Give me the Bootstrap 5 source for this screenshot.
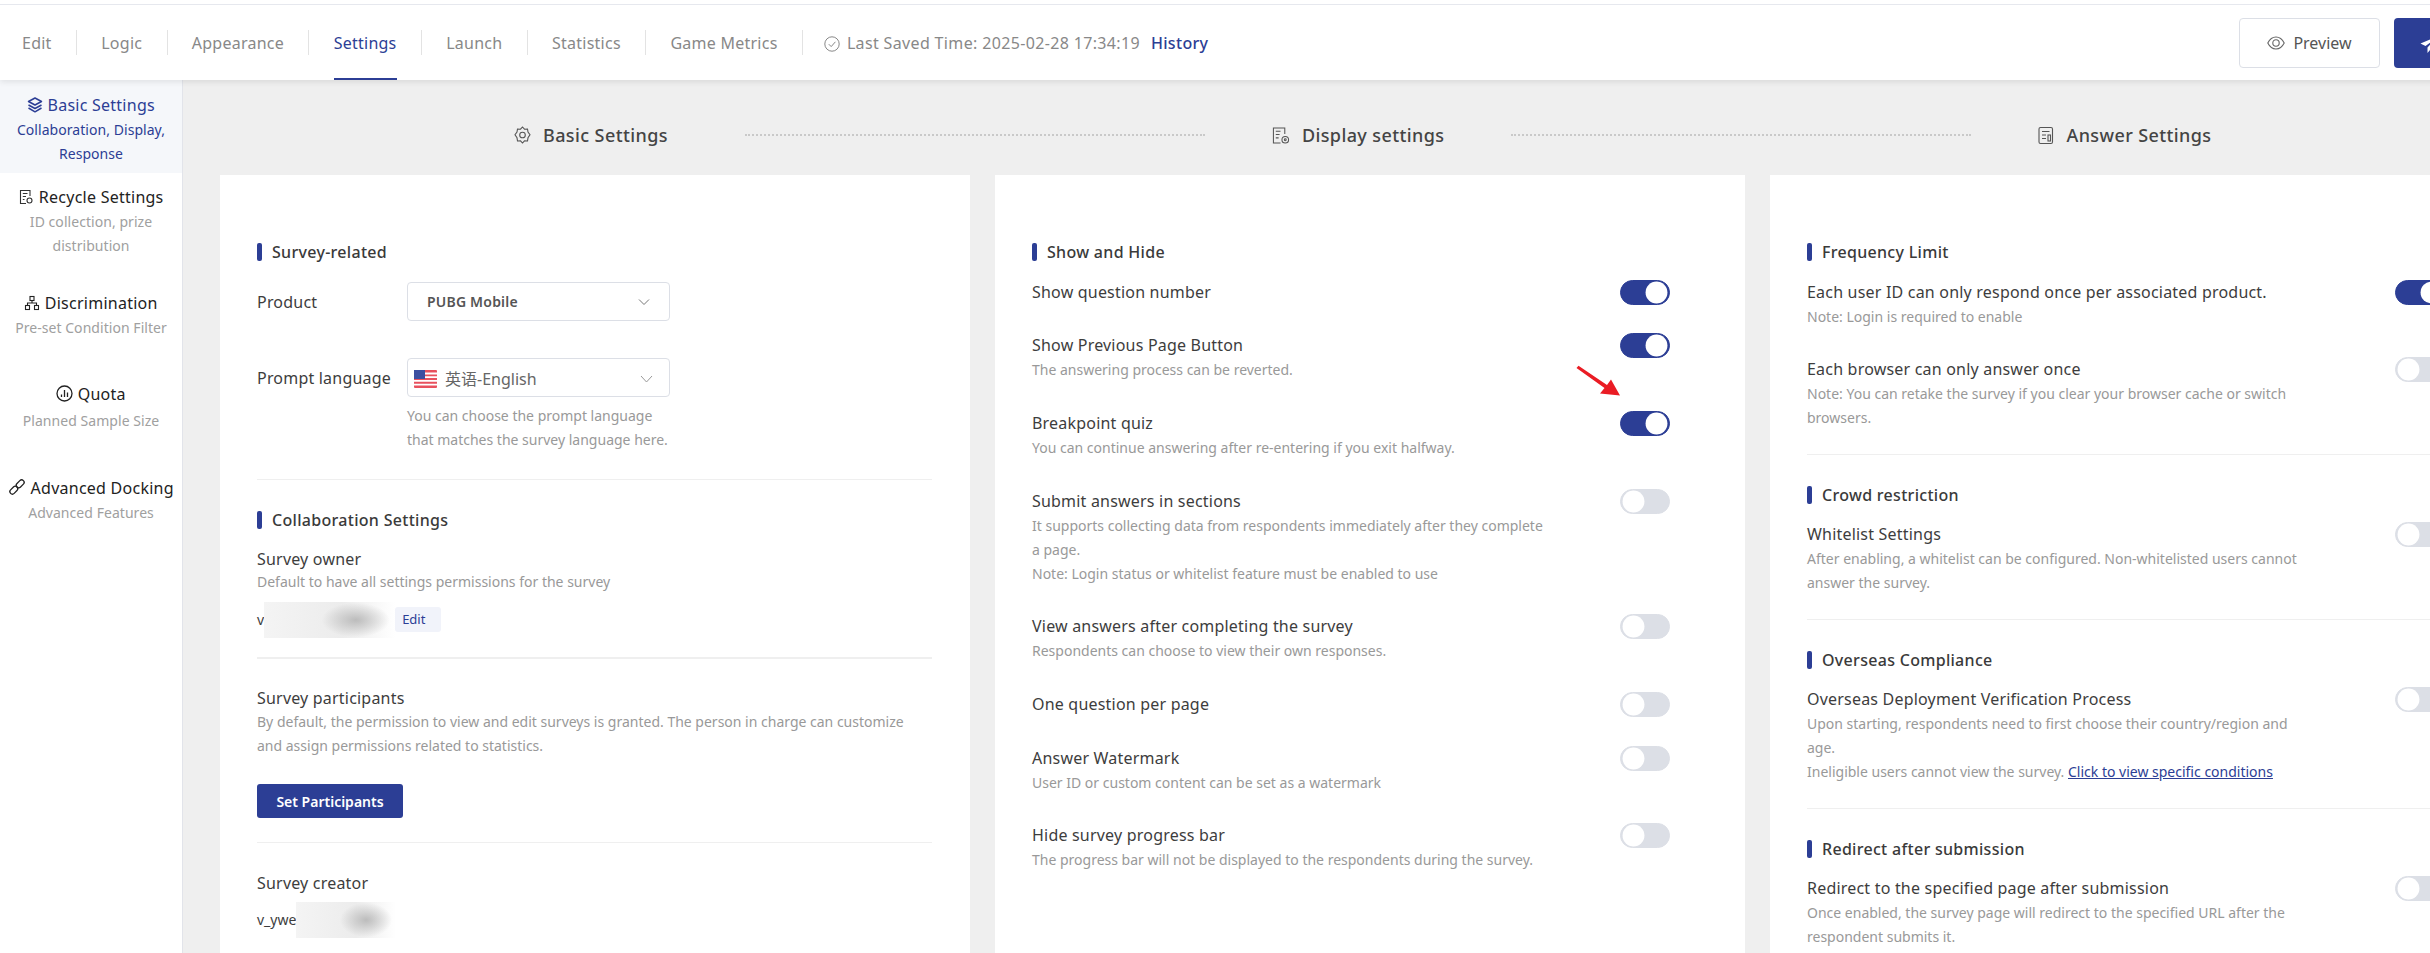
<!DOCTYPE html>
<html lang="en">
  <head>
    <meta charset="UTF-8" />
    <title>Survey Settings</title>
    <link href="https://cdn.jsdelivr.net/npm/bootstrap@5.3.0/dist/css/bootstrap.min.css" rel="stylesheet" />
    <style>
      html, body { height: 953px; overflow: hidden; background: #efefef; }
      body { font-family: "Noto Sans", "Noto Sans CJK SC", sans-serif; font-size: 16px; color: #3d3d3d; }
      .page-wrap { width: 2520px; }

      /* top bar */
      .top-bar { height: 80px; padding-top: 4px; background: #fff; box-shadow: 0 2px 6px rgba(0, 0, 0, .09); position: relative; z-index: 2; }
      .top-inner { height: 76px; border-top: 1px solid #e6e8ee; }
      .tab-list { margin-top: 25px; padding-left: 22px; align-self: flex-start; }
      .tab-item { height: 25px; padding: 0 24.3px; border-right: 1px solid #e3e3e3; }
      .tab-item:first-child { padding-left: 0; }
      .tab-link { display: block; height: 50px; line-height: 25px; padding: 1px 0 22px; border-bottom: 2px solid transparent; color: #888; letter-spacing: .25px; text-decoration: none; }
      .tab-link.on { color: #2c3e95; border-bottom-color: #2c3e95; }
      .save-info { margin: 26px 0 0 21px; line-height: 25px; color: #888; letter-spacing: .35px; align-self: flex-start; }
      .save-info svg { margin-right: 7px; }
      .save-info a { margin-left: 11px; color: #2c3e95; font-weight: 500; text-decoration: none; letter-spacing: .3px; }
      .top-actions { margin: 13px 0 0 auto; gap: 14px; }
      .btn-preview { width: 141px; height: 50px; border: 1px solid #dcdfe6; color: #555; background: #fff; font-size: 16px; border-radius: 4px; }
      .btn-publish { width: 126px; height: 50px; background: #2c3e95; border: 0; border-radius: 4px; text-align: left; padding-left: 26px; }

      /* sidebar */
      .side-bar { width: 183px; height: 873px; background: #fff; border-right: 1px solid #e2e4ea; flex-shrink: 0; text-align: center; }
      .side-item { padding: 12px 0 7px; line-height: 26px; color: #222; white-space: nowrap; letter-spacing: .25px; }
      .side-item small { display: block; font-size: 14px; line-height: 24px; color: #a0a0a0; letter-spacing: .05px; }
      .side-item.on { background: #f5f7fa; color: #2c3e95; }
      .side-item.on small { color: #2c3e95; }
      .side-item:nth-child(2) { margin: -1px 0 12.5px; }
      .side-item:nth-child(3) { margin-bottom: 22px; }
      .side-item:nth-child(4) { margin-bottom: 23px; }
      .side-item:nth-child(4) small { margin-top: 2px; }
      .side-item svg { vertical-align: -2px; }

      /* steps */
      .content-area { padding-left: 37px; }
      .step-row { height: 95px; padding: 15px 0 0 294px; }
      .step-item { font-size: 18px; font-weight: 500; color: #444; gap: 12px; letter-spacing: .4px; white-space: nowrap; }
      .step-line { width: 460px; margin: 0 67px; border-top: 2px dotted #c9c9c9; }
      .step-line.first-line { margin-left: 77px; }

      /* cards */
      .panel-row { gap: 25px; }
      .panel-box { width: 750px; height: 778px; padding: 64px 38px 0 37px; flex-shrink: 0; background: #fff; }
      .group-title { padding-left: 15px; line-height: 26px; font-weight: 500; letter-spacing: .3px; color: #3a3a3a; }
      .title-bar { display: block; width: 5px; height: 18px; margin: 4px 10px 0 -15px; float: left; background: #2c3e95; border-radius: 2px; }
      .group-sep { height: 1px; background: #efefef; }
      .opt-row { margin-top: 13.5px; }
      .opt-row + .opt-row { margin-top: 27.7px; }
      .opt-name { line-height: 26px; letter-spacing: .2px; }
      .opt-desc { font-size: 14px; line-height: 24px; color: #999; }
      .opt-desc a { color: #2c3e95; }
      .opt-row .form-switch { min-height: 0; margin: 0 37px 0 0; padding: 0; flex-shrink: 0; }
      .opt-row .form-switch .form-check-input { width: 50px; height: 25px; margin: 1px 0 0; float: none; display: block; border-color: #dcdfe6; background-color: #dcdfe6; background-size: 25px 25px; background-image: url("data:image/svg+xml,%3csvg xmlns='http://www.w3.org/2000/svg' viewBox='-4 -4 8 8'%3e%3ccircle r='3.5' fill='%23fff'/%3e%3c/svg%3e"); }
      .opt-row .form-switch .form-check-input:checked { background-color: #2c3e95; border-color: #2c3e95; }
      .field-label { width: 150px; letter-spacing: .2px; }
      .field-box { width: 263px; height: 39px; padding: 0 19px; border: 1px solid #dcdfe6; border-radius: 4px; font-size: 14px; font-weight: 600; letter-spacing: .2px; color: #555; }
      .field-box.flag-box { padding: 2px 16px 0 6px; font-size: 16px; font-weight: 400; letter-spacing: 0; color: #666; }
      .flag-box svg:first-child { margin-right: 8px; }
      .blur-name { display: inline-block; height: 36px; background: radial-gradient(ellipse 26% 48% at 70% 50%, #bcbcbc, rgba(230, 230, 230, 0)), linear-gradient(to right, #f4f4f4, #ececec 60%, #fff); }
      .user-row { height: 25px; line-height: 25px; font-size: 14px; }
      .edit-chip { height: 25px; width: 46px; padding-left: 7px; background: #f1f3fa; color: #2c3e95; font-size: 13px; border-radius: 3px; }
      .btn-set { display: block; width: 146px; height: 34px; margin-top: 26px; padding: 0; background: #2c3e95; border: 0; color: #fff; font-size: 14px; font-weight: 600; border-radius: 3px; }
      .note-arrow { position: absolute; left: 580px; top: 190px; }

      /* vertical rhythm of the first card */
      .field-row-a { margin-top: 17px; }
      .field-row-b { margin-top: 37px; }
      .help-text { margin: 7px 0 0 150px; }
      .sep-a { margin-top: 27px; }
      .title-b { margin-top: 27px; }
      .owner-name { margin-top: 13px; }
      .owner-desc { margin-top: -2px; }
      .owner-row { margin-top: 13px; }
      .owner-blur { width: 131px; margin-top: -5px; }
      .sep-b { margin-top: 25px; height: 2px; }
      .part-name { margin-top: 26px; }
      .part-desc { margin-top: -1px; }
      .sep-c { margin-top: 24px; }
      .creator-name { margin-top: 27px; }
      .creator-row { margin-top: 11px; }
      .creator-blur { width: 100px; margin-top: -5px; }
      .sep-d { margin: 24px 0 26.5px; }
    </style>
  </head>
  <body>
    <div class="page-wrap">
      <div class="top-bar">
        <div class="top-inner d-flex">
          <ul class="tab-list nav">
            <li class="tab-item"><a class="tab-link" href="#">Edit</a></li>
            <li class="tab-item"><a class="tab-link" href="#">Logic</a></li>
            <li class="tab-item"><a class="tab-link" href="#">Appearance</a></li>
            <li class="tab-item"><a class="tab-link on" href="#">Settings</a></li>
            <li class="tab-item"><a class="tab-link" href="#">Launch</a></li>
            <li class="tab-item"><a class="tab-link" href="#">Statistics</a></li>
            <li class="tab-item"><a class="tab-link" href="#">Game Metrics</a></li>
          </ul>
          <div class="save-info d-flex align-items-center">
            <svg width="16" height="16" viewBox="0 0 16 16" fill="none" stroke="#888"><circle cx="8" cy="8" r="7.2" /><path d="M4.8 8.2 7.2 10.6 11.4 5.8" /></svg>
            Last Saved Time: 2025-02-28 17:34:19
            <a href="#">History</a>
          </div>
          <div class="top-actions d-flex">
            <button class="btn-preview btn d-flex align-items-center justify-content-center gap-2">
              <svg width="18" height="14" viewBox="0 0 18 14" fill="none" stroke="#666" stroke-width="1.1"><path d="M.8 7C2.800 3 5.600 1 9 1s6.200 2 8.200 6c-2 4-4.800 6-8.200 6S2.800 11 .8 7Z" /><circle cx="9" cy="7" r="3.200" /></svg>
              Preview
            </button>
            <button class="btn-publish btn" aria-label="Publish">
              <svg width="18" height="18" viewBox="0 0 18 18" fill="#fff"><path d="M17.500 .5 .5 7.500l5 2.500 9-6.500-7 8v5.500l3-3.500 3.500 2Z" /></svg>
            </button>
          </div>
        </div>
      </div>

      <div class="d-flex">
        <div class="side-bar">
          <div class="side-item on">
            <svg width="16" height="16" viewBox="0 0 16 16" fill="none" stroke="#2c3e95" stroke-width="1.5" stroke-linejoin="round"><path d="M8 1 14.500 4.500 8 8 1.500 4.500Z" /><path d="M1.500 8 8 11.500 14.500 8" /><path d="M1.500 11 8 14.800 14.500 11" /></svg>
            Basic Settings
            <small>Collaboration, Display,<br />Response</small>
          </div>
          <div class="side-item">
            <svg width="16" height="16" viewBox="0 0 16 16" fill="none" stroke="#333" stroke-width="1.1"><path d="M8 14.500H2.500V1.500H12V7" /><path d="M4.800 4.500H9.500M4.800 7.500H8M4.800 10.500H6.500" /><circle cx="11.500" cy="11.500" r="2.500" /></svg>
            Recycle Settings
            <small>ID collection, prize<br />distribution</small>
          </div>
          <div class="side-item">
            <svg width="16" height="16" viewBox="0 0 16 16" fill="none" stroke="#222" stroke-width="1.1"><rect x="6" y="1.500" width="4" height="4" /><rect x="1.500" y="10.500" width="4" height="4" /><rect x="10.500" y="10.500" width="4" height="4" /><path d="M8 5.500V8M3.500 10.500V8H12.500V10.500" /></svg>
            Discrimination
            <small>Pre-set Condition Filter</small>
          </div>
          <div class="side-item">
            <svg width="17" height="17" viewBox="0 0 17 17" fill="none" stroke="#222" stroke-width="1.300"><circle cx="8.500" cy="8.500" r="7.500" /><path d="M5.500 9.500V12M8.500 5V12M11.500 7.500V12" /></svg>
            Quota
            <small>Planned Sample Size</small>
          </div>
          <div class="side-item">
            <svg width="18" height="18" viewBox="0 0 18 18" fill="none" stroke="#222" stroke-width="1.300"><rect x="-4.500" y="-2.500" width="9" height="5" rx="2.500" transform="translate(5.800 12.200) rotate(-45)" /><rect x="-4.500" y="-2.500" width="9" height="5" rx="2.500" transform="translate(12.200 5.800) rotate(-45)" /></svg>
            Advanced Docking
            <small>Advanced Features</small>
          </div>
        </div>

        <div class="content-area">
          <div class="step-row d-flex align-items-center">
            <div class="step-item d-flex align-items-center">
              <svg width="17" height="18" viewBox="0 0 17 18" fill="none" stroke="#555" stroke-width="1.100"><path d="M8.500 1 10.500 3.200 13.500 3 14 6 16 8.800 14 11.800 13.500 15 10.500 14.800 8.500 17 6.500 14.800 3.500 15 3 11.800 1 8.800 3 6 3.500 3 6.500 3.200Z" /><circle cx="8.500" cy="9" r="2.800" /></svg>
              Basic Settings
            </div>
            <div class="step-line first-line"></div>
            <div class="step-item d-flex align-items-center">
              <svg width="18" height="19" viewBox="0 0 19 19" fill="none" stroke="#555" stroke-width="1.100"><path d="M9 17.500H1.500V1.500H13.500V8" /><path d="M4 5H9M4 8.500H8M4 12H7" /><circle cx="14" cy="14" r="3.500" /><circle cx="14" cy="14" r="1" /></svg>
              Display settings
            </div>
            <div class="step-line"></div>
            <div class="step-item d-flex align-items-center">
              <svg width="16" height="19" viewBox="0 0 16 19" fill="none" stroke="#555" stroke-width="1.100"><rect x="1" y="1.500" width="13.500" height="16" rx="1.500" /><path d="M4 5.500H11.500M4 9H8M4 12.500H8" /><rect x="10" y="9" width="2.500" height="6" /></svg>
              Answer Settings
            </div>
          </div>

          <div class="panel-row d-flex">
            <!-- survey info -->
            <div class="panel-box">
              <div class="group-title"><span class="title-bar"></span>Survey-related</div>
              <div class="d-flex align-items-center field-row-a">
                <div class="field-label">Product</div>
                <div class="field-box d-flex align-items-center justify-content-between">
                  PUBG Mobile
                  <svg width="12" height="8" viewBox="0 0 12 8" fill="none" stroke="#777"><path d="M1 1.500 6 6.500 11 1.500" /></svg>
                </div>
              </div>
              <div class="d-flex align-items-center field-row-b">
                <div class="field-label">Prompt language</div>
                <div class="field-box flag-box d-flex align-items-center">
                  <svg width="23" height="18" viewBox="0 0 23 18"><rect width="23" height="18" rx="1" fill="#e8515e" /><path d="M0 3.500H23M0 7.200H23M0 10.900H23M0 14.600H23" stroke="#fff" stroke-width="1.800" /><rect width="11" height="9" fill="#3c4fa0" /></svg>
                  英语-English
                  <svg class="ms-auto" width="13" height="8" viewBox="0 0 13 8" fill="none" stroke="#999"><path d="M1 1 6.500 7 12 1" /></svg>
                </div>
              </div>
              <div class="opt-desc help-text">You can choose the prompt language<br />that matches the survey language here.</div>
              <div class="group-sep sep-a"></div>
              <div class="group-title title-b"><span class="title-bar"></span>Collaboration Settings</div>
              <div class="opt-name owner-name">Survey owner</div>
              <div class="opt-desc owner-desc">Default to have all settings permissions for the survey</div>
              <div class="user-row d-flex owner-row">
                <span>v</span><span class="blur-name owner-blur"></span><span class="edit-chip">Edit</span>
              </div>
              <div class="group-sep sep-b"></div>
              <div class="opt-name part-name">Survey participants</div>
              <div class="opt-desc part-desc">By default, the permission to view and edit surveys is granted. The person in charge can customize<br />and assign permissions related to statistics.</div>
              <button class="btn btn-set">Set Participants</button>
              <div class="group-sep sep-c"></div>
              <div class="opt-name creator-name">Survey creator</div>
              <div class="user-row d-flex creator-row">
                <span>v_ywe</span><span class="blur-name creator-blur"></span>
              </div>
            </div>

            <!-- display -->
            <div class="panel-box position-relative">
              <svg class="note-arrow" width="46" height="32" viewBox="0 0 46 32"><path d="M1.500 3 3.500 .8 32 20 36 14.500 45 30.500 25 28.500 29.500 23Z" fill="#ea1c24" /></svg>
              <div class="group-title"><span class="title-bar"></span>Show and Hide</div>
              <div class="opt-row d-flex justify-content-between">
                <div><div class="opt-name">Show question number</div></div>
                <div class="form-check form-switch"><input class="form-check-input" type="checkbox" checked /></div>
              </div>
              <div class="opt-row d-flex justify-content-between">
                <div><div class="opt-name">Show Previous Page Button</div><div class="opt-desc">The answering process can be reverted.</div></div>
                <div class="form-check form-switch"><input class="form-check-input" type="checkbox" checked /></div>
              </div>
              <div class="opt-row d-flex justify-content-between">
                <div><div class="opt-name">Breakpoint quiz</div><div class="opt-desc">You can continue answering after re-entering if you exit halfway.</div></div>
                <div class="form-check form-switch"><input class="form-check-input" type="checkbox" checked /></div>
              </div>
              <div class="opt-row d-flex justify-content-between">
                <div><div class="opt-name">Submit answers in sections</div><div class="opt-desc">It supports collecting data from respondents immediately after they complete<br />a page.<br />Note: Login status or whitelist feature must be enabled to use</div></div>
                <div class="form-check form-switch"><input class="form-check-input" type="checkbox" /></div>
              </div>
              <div class="opt-row d-flex justify-content-between">
                <div><div class="opt-name">View answers after completing the survey</div><div class="opt-desc">Respondents can choose to view their own responses.</div></div>
                <div class="form-check form-switch"><input class="form-check-input" type="checkbox" /></div>
              </div>
              <div class="opt-row d-flex justify-content-between">
                <div><div class="opt-name">One question per page</div></div>
                <div class="form-check form-switch"><input class="form-check-input" type="checkbox" /></div>
              </div>
              <div class="opt-row d-flex justify-content-between">
                <div><div class="opt-name">Answer Watermark</div><div class="opt-desc">User ID or custom content can be set as a watermark</div></div>
                <div class="form-check form-switch"><input class="form-check-input" type="checkbox" /></div>
              </div>
              <div class="opt-row d-flex justify-content-between">
                <div><div class="opt-name">Hide survey progress bar</div><div class="opt-desc">The progress bar will not be displayed to the respondents during the survey.</div></div>
                <div class="form-check form-switch"><input class="form-check-input" type="checkbox" /></div>
              </div>
            </div>

            <!-- answers -->
            <div class="panel-box">
              <div class="group-title"><span class="title-bar"></span>Frequency Limit</div>
              <div class="opt-row d-flex justify-content-between">
                <div><div class="opt-name">Each user ID can only respond once per associated product.</div><div class="opt-desc">Note: Login is required to enable</div></div>
                <div class="form-check form-switch"><input class="form-check-input" type="checkbox" checked /></div>
              </div>
              <div class="opt-row d-flex justify-content-between">
                <div><div class="opt-name">Each browser can only answer once</div><div class="opt-desc">Note: You can retake the survey if you clear your browser cache or switch<br />browsers.</div></div>
                <div class="form-check form-switch"><input class="form-check-input" type="checkbox" /></div>
              </div>
              <div class="group-sep sep-d"></div>
              <div class="group-title"><span class="title-bar"></span>Crowd restriction</div>
              <div class="opt-row d-flex justify-content-between">
                <div><div class="opt-name">Whitelist Settings</div><div class="opt-desc">After enabling, a whitelist can be configured. Non-whitelisted users cannot<br />answer the survey.</div></div>
                <div class="form-check form-switch"><input class="form-check-input" type="checkbox" /></div>
              </div>
              <div class="group-sep sep-d"></div>
              <div class="group-title"><span class="title-bar"></span>Overseas Compliance</div>
              <div class="opt-row d-flex justify-content-between">
                <div><div class="opt-name">Overseas Deployment Verification Process</div><div class="opt-desc">Upon starting, respondents need to first choose their country/region and<br />age.<br />Ineligible users cannot view the survey. <a href="#">Click to view specific conditions</a></div></div>
                <div class="form-check form-switch"><input class="form-check-input" type="checkbox" /></div>
              </div>
              <div class="group-sep sep-d"></div>
              <div class="group-title"><span class="title-bar"></span>Redirect after submission</div>
              <div class="opt-row d-flex justify-content-between">
                <div><div class="opt-name">Redirect to the specified page after submission</div><div class="opt-desc">Once enabled, the survey page will redirect to the specified URL after the<br />respondent submits it.</div></div>
                <div class="form-check form-switch"><input class="form-check-input" type="checkbox" /></div>
              </div>
            </div>
          </div>
        </div>
      </div>
    </div>
    <script src="https://cdn.jsdelivr.net/npm/bootstrap@5.3.0/dist/js/bootstrap.bundle.min.js"></script>
  </body>
</html>
